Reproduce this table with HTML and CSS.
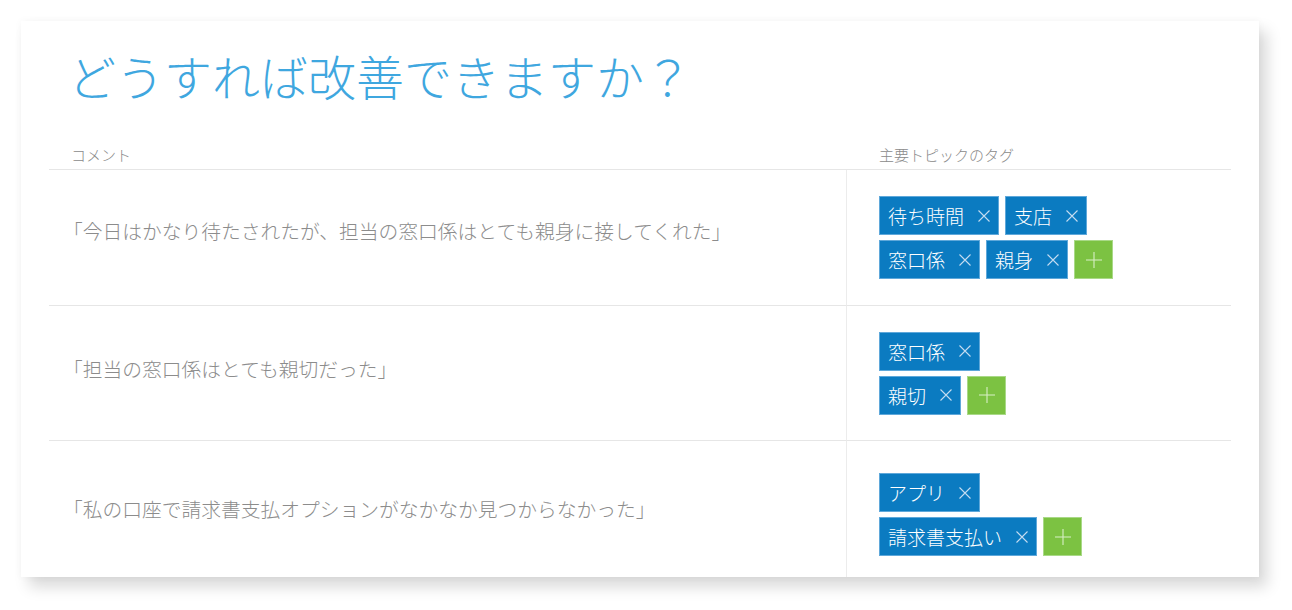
FILE: index.html
```html
<!DOCTYPE html>
<html lang="ja">
<head>
<meta charset="utf-8">
<title>どうすれば改善できますか？</title>
<link rel="stylesheet" href="styles.css">
</head>
<body>
<div class="card">
  <h1 class="title">どうすれば改善できますか？</h1>
  <div class="table">
    <div class="th th-comment">コメント</div>
    <div class="th th-tags">主要トピックのタグ</div>

    <div class="td comment comment-1">「今日はかなり待たされたが、担当の窓口係はとても親身に接してくれた」</div>
    <div class="td tags">
      <div class="tag-line">
        <span class="tag">待ち時間<svg class="x" viewBox="0 0 12 12"><path d="M0.5 0.5L11.5 11.5M11.5 0.5L0.5 11.5"/></svg></span>
        <span class="tag">支店<svg class="x" viewBox="0 0 12 12"><path d="M0.5 0.5L11.5 11.5M11.5 0.5L0.5 11.5"/></svg></span>
      </div>
      <div class="tag-line">
        <span class="tag">窓口係<svg class="x" viewBox="0 0 12 12"><path d="M0.5 0.5L11.5 11.5M11.5 0.5L0.5 11.5"/></svg></span>
        <span class="tag">親身<svg class="x" viewBox="0 0 12 12"><path d="M0.5 0.5L11.5 11.5M11.5 0.5L0.5 11.5"/></svg></span>
        <span class="add"><svg class="plus" viewBox="0 0 16 16"><path d="M8 0V16M0 8H16"/></svg></span>
      </div>
    </div>

    <div class="td comment comment-2">「担当の窓口係はとても親切だった」</div>
    <div class="td tags">
      <div class="tag-line">
        <span class="tag">窓口係<svg class="x" viewBox="0 0 12 12"><path d="M0.5 0.5L11.5 11.5M11.5 0.5L0.5 11.5"/></svg></span>
      </div>
      <div class="tag-line">
        <span class="tag">親切<svg class="x" viewBox="0 0 12 12"><path d="M0.5 0.5L11.5 11.5M11.5 0.5L0.5 11.5"/></svg></span>
        <span class="add"><svg class="plus" viewBox="0 0 16 16"><path d="M8 0V16M0 8H16"/></svg></span>
      </div>
    </div>

    <div class="td comment last">「私の口座で請求書支払オプションがなかなか見つからなかった」</div>
    <div class="td tags last tags-low">
      <div class="tag-line">
        <span class="tag">アプリ<svg class="x" viewBox="0 0 12 12"><path d="M0.5 0.5L11.5 11.5M11.5 0.5L0.5 11.5"/></svg></span>
      </div>
      <div class="tag-line">
        <span class="tag">請求書支払い<svg class="x" viewBox="0 0 12 12"><path d="M0.5 0.5L11.5 11.5M11.5 0.5L0.5 11.5"/></svg></span>
        <span class="add"><svg class="plus" viewBox="0 0 16 16"><path d="M8 0V16M0 8H16"/></svg></span>
      </div>
    </div>
  </div>
</div>
</body>
</html>
```

FILE: styles.css
```css
* { box-sizing: border-box; }

html, body {
  margin: 0;
  padding: 0;
  background: #ffffff;
}

body {
  font-family: "Noto Sans CJK JP", "Noto Sans", sans-serif;
  padding: 21px 0 33px 21px;
}

.card {
  width: 1238px;
  height: 556px;
  background: #ffffff;
  padding: 26px 28px 0 28px;
  box-shadow: 8px 10px 14px rgba(0, 0, 0, 0.15), 0 0 8px rgba(0, 0, 0, 0.04);
  display: flex;
  flex-direction: column;
}

.title {
  margin: 0 0 39px 19px;
  font-size: 48px;
  line-height: 56px;
  font-weight: 300;
  color: #3fa7df;
  letter-spacing: 0;
}

.table {
  display: grid;
  grid-template-columns: 797px 1fr;
  grid-template-rows: 28px 136px 135px 1fr;
  flex: 1;
}

.th {
  font-size: 15px;
  line-height: 18px;
  color: #8a8a8a;
  font-weight: 300;
  padding-top: 4px;
  border-bottom: 1px solid #e6e6e6;
}

.th-comment { padding-left: 22px; }
.th-tags { padding-left: 33px; }

.td {
  border-bottom: 1px solid #e6e6e6;
  display: flex;
  flex-direction: column;
  justify-content: center;
}

.td.last { border-bottom: none; }

.comment {
  font-size: 19.75px;
  line-height: 26px;
  color: #8c8c8c;
  font-weight: 300;
  padding-left: 14px;
}

.comment-1 { padding-bottom: 13px; }
.comment-2 { padding-bottom: 8px; }

.tags {
  border-left: 1px solid #ececec;
  padding-left: 32px;
  gap: 5px;
}

.tags-low { padding-top: 11px; }

.tag-line {
  display: flex;
  gap: 6px;
}

.tag {
  height: 39px;
  display: inline-flex;
  align-items: center;
  padding: 0 8px 0 8px;
  background: #0b7bc1;
  border: 1px solid #5fa8da;
  color: #ffffff;
  font-size: 19px;
  font-weight: 300;
  line-height: 1;
}

.x {
  width: 12px;
  height: 12px;
  margin-left: 14px;
  fill: none;
  stroke: #c4dcf0;
  stroke-width: 1.1;
}

.add {
  width: 39px;
  height: 39px;
  display: inline-flex;
  align-items: center;
  justify-content: center;
  background: #7cc242;
  border: 1px solid #a9d987;
}

.plus {
  width: 16px;
  height: 16px;
  fill: none;
  stroke: #d8efc6;
  stroke-width: 1.1;
}
```
